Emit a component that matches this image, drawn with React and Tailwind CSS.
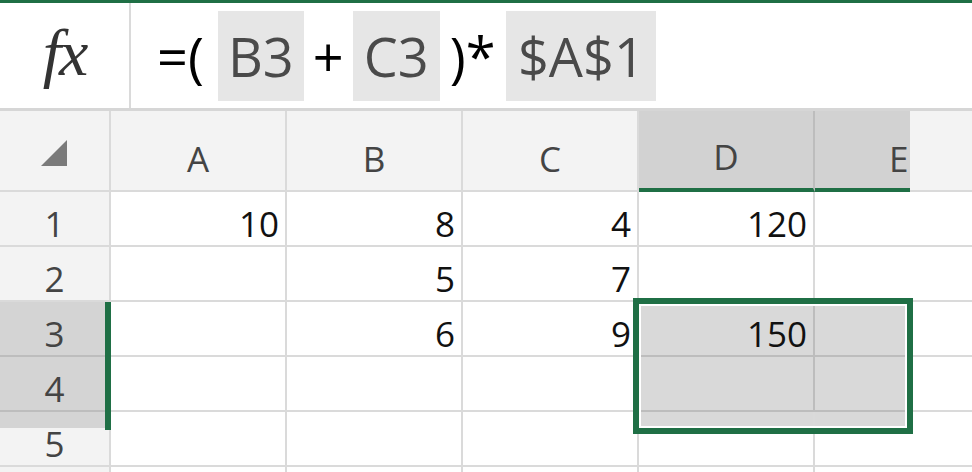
import React from 'react';

const cols = ['A', 'B', 'C', 'D'];

const rows = [
  { n: 1, v: ['10', '8', '4', '120'] },
  { n: 2, v: ['', '5', '7', ''] },
  { n: 3, v: ['', '6', '9', '150'] },
  { n: 4, v: ['', '', '', ''] },
  { n: 5, v: ['', '', '', ''] },
  { n: 6, v: ['', '', '', ''], hide: true },
];

const RowHeader = ({ n, hide }) => {
  const sel = n === 3 || n === 4;
  const part = n === 5;
  let cls = 'bg-[#f3f3f3] border-[#dadada]';
  if (sel) cls = 'bg-[#d4d4d4] border-b-[#bdbdbd] border-r-[#dadada]';
  if (part) cls = 'bg-[linear-gradient(to_bottom,#d4d4d4_16px,#f3f3f3_16px)] border-[#dadada]';
  return (
    <div className={`w-[111px] shrink-0 flex items-end justify-center pb-[4px] border-r-2 border-b-2 text-[#444] ${cls}`}>
      {hide ? '' : n}
    </div>
  );
};

const Cell = ({ value, col, n }) => {
  const sel = (col === 3 || col === 4) && (n === 3 || n === 4);
  const part = (col === 3 || col === 4) && n === 5;
  let cls = 'bg-white border-[#dadada]';
  if (sel) cls = 'bg-[#d9d9d9] border-[#bdbdbd]';
  if (part) cls = 'bg-[linear-gradient(to_bottom,#d9d9d9_16px,#fff_16px)] border-[#dadada]';
  const width = col === 4 ? 'w-[95px]' : 'w-[176px] border-r-2';
  return (
    <div className={`${width} shrink-0 flex items-end justify-end pr-[6px] pb-[4px] border-b-2 text-[#111] ${cls}`}>
      {value}
    </div>
  );
};

export default function App() {
  return (
    <div
      className="relative w-[972px] h-[472px] overflow-hidden bg-white"
      style={{ fontFamily: '"Open Sans", "Noto Sans", sans-serif' }}
    >
      {/* formula bar */}
      <div className="h-[3px] bg-[#1f6f45]" />
      <div className="flex h-[108px] border-b-[3px] border-[#d6d6d6] bg-white">
        <div className="w-[131px] shrink-0 flex items-center justify-center border-r-2 border-[#dadada]">
          <span
            className="italic text-[66px] leading-none text-[#333] -mt-[6px] tracking-[-2px]"
            style={{ fontFamily: '"Liberation Serif", "DejaVu Serif", serif' }}
          >
            fx
          </span>
        </div>
        <div className="flex items-center pl-[26px] text-[54px] leading-none text-black">
          <span>=(</span>
          <span className="ml-[14px] w-[86px] h-[90px] flex items-center justify-center bg-[#e6e6e6] text-[#4a4a4a]">B3</span>
          <span className="mx-[9px]">+</span>
          <span className="w-[87px] h-[90px] flex items-center justify-center bg-[#e6e6e6] text-[#4a4a4a]">C3</span>
          <span className="ml-[10px] mr-[11px]">)*</span>
          <span className="w-[150px] h-[90px] flex items-center justify-center bg-[#e6e6e6] text-[#4a4a4a]">$A$1</span>
        </div>
      </div>

      {/* grid */}
      <div className="relative text-[35px] leading-none">
        <div className="flex h-[81px]">
          <div className="w-[111px] shrink-0 flex items-center justify-center bg-[#f3f3f3] border-r-2 border-b-2 border-[#dadada]">
            <svg width="26" height="26" viewBox="0 0 26 26" className="ml-[-2px] mt-[4px]">
              <polygon points="26,0 26,26 0,26" fill="#7a7a7a" />
            </svg>
          </div>
          {cols.map((c, i) => (
            <div
              key={c}
              className={`w-[176px] shrink-0 flex items-end justify-center pb-[14px] border-r-2 text-[#444] ${
                i === 3
                  ? 'bg-[#d2d2d2] border-r-[#bdbdbd] border-b-4 border-b-[#1f6f45] pb-[12px]'
                  : 'bg-[#f3f3f3] border-[#dadada] border-b-2'
              }`}
            >
              {c}
            </div>
          ))}
          <div className="w-[95px] shrink-0 overflow-hidden flex items-end pl-[74px] pb-[12px] bg-[#d2d2d2] border-b-4 border-[#1f6f45] text-[#444]">
            E
          </div>
          <div className="flex-1 bg-[#f3f3f3] border-b-2 border-[#dadada]" />
        </div>

        {rows.map((r) => (
          <div key={r.n} className="flex h-[55px]">
            <RowHeader n={r.n} hide={r.hide} />
            {r.v.map((v, i) => (
              <Cell key={i} value={v} col={i} n={r.n} />
            ))}
            <Cell value="" col={4} n={r.n} />
            <div className="flex-1 bg-white border-b-2 border-[#dadada]" />
          </div>
        ))}

        {/* row selection marker */}
        <div className="absolute left-[105px] top-[191px] w-[6px] h-[128px] bg-[#1f6f45]" />
        {/* selection box */}
        <div className="absolute left-[633px] top-[187px] w-[280px] h-[136px] border-[6px] border-[#1f6f45] pointer-events-none">
          <div className="w-full h-full border-2 border-white" />
        </div>
      </div>
    </div>
  );
}
